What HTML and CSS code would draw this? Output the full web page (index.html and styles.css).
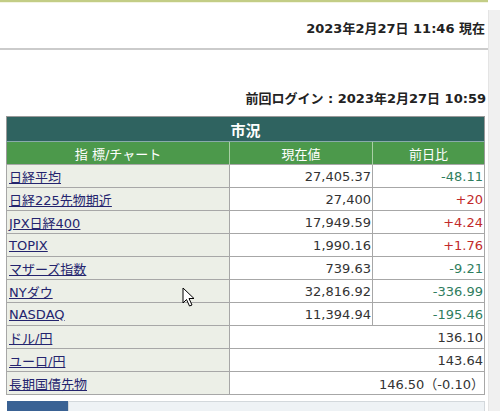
FILE: index.html
```html
<!DOCTYPE html>
<html lang="ja">
<head>
<meta charset="utf-8">
<title>市況</title>
<link rel="stylesheet" href="styles.css">
</head>
<body>
<div class="page">
  <div class="main">
    <div class="topline"></div>
    <div class="now">2023年2月27日 11:46 現在</div>
    <div class="rule"></div>
    <div class="login">前回ログイン : 2023年2月27日 10:59</div>
    <table class="market">
      <tr class="title"><th colspan="3">市況</th></tr>
      <tr class="head"><th class="c1">指 標/チャート</th><th class="c2">現在値</th><th class="c3">前日比</th></tr>
      <tr><td class="name"><a href="#">日経平均</a></td><td class="num">27,405.37</td><td class="num down">-48.11</td></tr>
      <tr><td class="name"><a href="#">日経225先物期近</a></td><td class="num">27,400</td><td class="num up">+20</td></tr>
      <tr><td class="name"><a href="#">JPX日経400</a></td><td class="num">17,949.59</td><td class="num up">+4.24</td></tr>
      <tr><td class="name"><a href="#">TOPIX</a></td><td class="num">1,990.16</td><td class="num up">+1.76</td></tr>
      <tr><td class="name"><a href="#">マザーズ指数</a></td><td class="num">739.63</td><td class="num down">-9.21</td></tr>
      <tr><td class="name"><a href="#">NYダウ</a></td><td class="num">32,816.92</td><td class="num down">-336.99</td></tr>
      <tr><td class="name"><a href="#">NASDAQ</a></td><td class="num">11,394.94</td><td class="num down">-195.46</td></tr>
      <tr><td class="name"><a href="#">ドル/円</a></td><td class="num" colspan="2">136.10</td></tr>
      <tr><td class="name"><a href="#">ユーロ/円</a></td><td class="num" colspan="2">143.64</td></tr>
      <tr><td class="name"><a href="#">長期国債先物</a></td><td class="num bond" colspan="2">146.50（-0.10）</td></tr>
    </table>
    <div class="tabs"><div class="tab-active"></div><div class="tab-rest"></div></div>
  </div>
  <div class="scroll"></div>
  <svg class="cursor" width="14" height="22" viewBox="0 0 14 22"><path d="M1 1 L1 16 L4.5 12.5 L7.5 19 L10 18 L7 11.5 L12 11.5 Z" fill="#fff" stroke="#000" stroke-width="1"/></svg>
</div>
</body>
</html>
```

FILE: styles.css
```css
html, body {
  margin: 0;
  padding: 0;
  background: #fff;
}
body {
  font-family: "DejaVu Sans", "Noto Sans CJK JP", sans-serif;
  font-size: 13px;
  color: #222;
}
.page {
  position: relative;
  display: flex;
  width: 500px;
  height: 411px;
  overflow: hidden;
}
.main {
  width: 488px;
  flex: none;
}
.scroll {
  flex: 1;
  margin-top: 10px;
  background: #f0f0f0;
  border-left: 1px solid #e4e4e4;
}
.topline {
  height: 2px;
  background: #c3cd86;
  border-bottom: 1px solid #f3f5e2;
}
.now {
  font-weight: bold;
  text-align: right;
  line-height: 16px;
  padding: 18px 3px 11px 0;
}
.rule {
  height: 2px;
  background: #cbcbcb;
}
.login {
  font-weight: bold;
  text-align: right;
  line-height: 16px;
  padding: 41px 2px 0 0;
  margin-bottom: 9px;
}
.market {
  margin-left: 6px;
  width: 479px;
  border-collapse: collapse;
  border: 1px solid #999;
}
.market th, .market td {
  padding: 0;
}
.title th {
  height: 24px;
  background: #2f6360;
  color: #fff;
  font-size: 15px;
  font-weight: bold;
  text-align: center;
  border-bottom: 1px solid #8aa;
}
.head th {
  height: 22px;
  background: #4c994b;
  color: #fff;
  font-weight: normal;
  text-align: center;
  border-left: 1px solid #a9cfa6;
}
.head th.c1 { width: 222px; border-left: none; }
.head th.c2 { width: 142px; }
.market td {
  height: 22px;
  border: 1px solid #a7a7a7;
}
.name {
  background: #ecefe7;
  padding-left: 2px !important;
}
.name a {
  color: #24246e;
  text-decoration: underline;
}
.num {
  text-align: right;
  padding-right: 1px !important;
  color: #333;
}
.down { color: #2f7d5e; }
.up { color: #c22a2a; }
.bond { padding-right: 0 !important; }
.tabs {
  display: flex;
  margin: 6px 0 0 7px;
  width: 478px;
  height: 12px;
}
.tab-active {
  width: 61px;
  background: #3a6294;
}
.tab-rest {
  flex: 1;
  background: #eef2f5;
  border: 1px solid #d3d8dc;
}
.cursor {
  position: absolute;
  left: 182px;
  top: 287px;
}
```
